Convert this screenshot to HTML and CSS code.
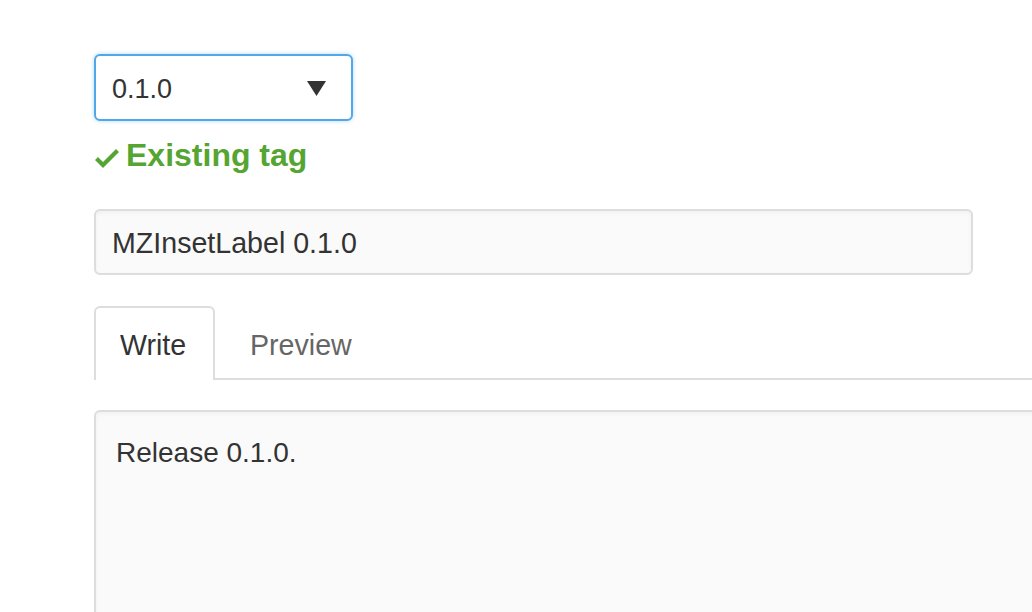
FILE: index.html
```html
<!DOCTYPE html>
<html>
<head>
<meta charset="utf-8">
<link rel="stylesheet" href="styles.css">
</head>
<body>
<div class="form">
  <div class="select">
    <span class="select-value">0.1.0</span>
    <svg class="caret" width="19" height="15" viewBox="0 0 19 15"><polygon points="0,0 19,0 9.5,15" fill="#333"/></svg>
  </div>
  <div class="tag-status">
    <svg class="check" width="24" height="32" viewBox="0 0 12 16"><path d="M12 5l-8 8-4-4 1.5-1.5L4 10l6.5-6.5L12 5z" fill="#55a532"/></svg>
    <span>Existing tag</span>
  </div>
  <div class="title-input">MZInsetLabel 0.1.0</div>
  <div class="tabnav">
    <div class="tab selected">Write</div>
    <div class="tab">Preview</div>
  </div>
  <div class="textarea">Release 0.1.0.</div>
</div>
</body>
</html>
```
FILE: styles.css
```css
html, body {
  margin: 0;
  padding: 0;
  background: #ffffff;
  overflow: hidden;
}
body {
  width: 1032px;
  height: 612px;
  font-family: "Liberation Sans", Arial, sans-serif;
  color: #333333;
}
.form {
  padding-left: 94px;
  padding-top: 54px;
  width: 1100px;
}
.select {
  width: 259px;
  height: 67px;
  box-sizing: border-box;
  border: 2px solid #51a7e8;
  border-radius: 6px;
  box-shadow: 0 0 4px rgba(81, 167, 232, 0.45);
  background: #ffffff;
  display: flex;
  align-items: center;
  justify-content: space-between;
  padding: 2px 25px 0 16px;
}
.select-value {
  font-size: 27px;
  line-height: 34px;
}
.caret {
  display: block;
}
.tag-status {
  margin-top: 14px;
  height: 40px;
  display: flex;
  align-items: center;
  color: #55a532;
  font-weight: bold;
  font-size: 32px;
  line-height: 40px;
}
.check {
  display: block;
  margin-left: 1px;
  margin-right: 7px;
  margin-top: 6px;
}
.title-input {
  margin-top: 34px;
  width: 879px;
  height: 66px;
  box-sizing: border-box;
  border: 2px solid #dddddd;
  border-radius: 6px;
  background: #fafafa;
  box-shadow: inset 0 2px 4px rgba(0, 0, 0, 0.04);
  padding: 2px 16px 0;
  font-size: 28.6px;
  line-height: 60px;
}
.tabnav {
  margin-top: 31px;
  height: 72px;
  border-bottom: 2px solid #dddddd;
  display: flex;
}
.tab {
  height: 74px;
  box-sizing: border-box;
  padding: 2px 0 0 24px;
  font-size: 28.6px;
  line-height: 70px;
  color: #666666;
  border: 2px solid transparent;
  border-bottom: none;
}
.tab.selected {
  width: 121px;
  color: #333333;
  background: #ffffff;
  border-color: #dddddd;
  border-radius: 6px 6px 0 0;
}
.tab + .tab {
  margin-left: 9px;
}
.textarea {
  margin-top: 30px;
  height: 260px;
  box-sizing: border-box;
  border: 2px solid #dddddd;
  border-radius: 6px;
  background: #fafafa;
  box-shadow: inset 0 2px 4px rgba(0, 0, 0, 0.04);
  padding: 20px 20px;
  font-size: 28px;
  line-height: 42px;
}
```
